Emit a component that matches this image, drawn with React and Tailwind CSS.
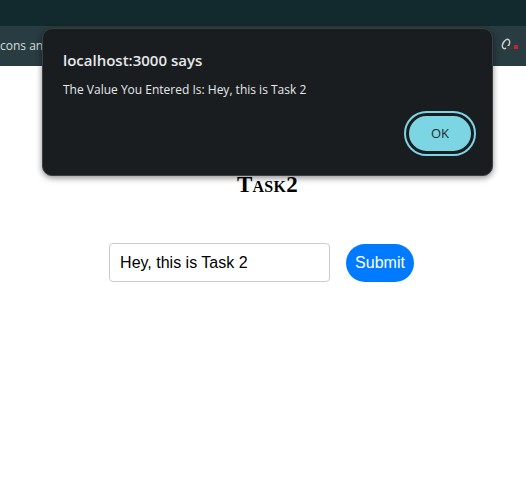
import React, { useState } from 'react';

export default function App() {
  const [value, setValue] = useState('Hey, this is Task 2');

  return (
    <div className="relative w-[526px] h-[490px] bg-white overflow-hidden font-['Liberation_Sans',Arial,sans-serif]">
      {/* browser chrome */}
      <div className="h-[26px] bg-[#12292e]" />
      <div className="h-[40px] bg-[#283c41] flex items-center justify-between pr-2">
        <span className="text-[12px] text-[#d6dcdd] font-['Open_Sans',sans-serif]">cons and</span>
        <svg width="18" height="14" viewBox="0 0 18 14" className="mt-[-2px]">
          <ellipse cx="6" cy="6" rx="3" ry="5" transform="rotate(30 6 6)" fill="none" stroke="#c9cfd0" strokeWidth="1.6" />
          <rect x="6" y="8" width="8" height="3" rx="1" fill="#3a3a3a" />
          <rect x="14" y="7" width="4" height="4" fill="#c2253a" />
        </svg>
      </div>

      {/* page */}
      <div className="flex flex-col items-center">
        <h1 className="mt-[106px] ml-[9px] text-[23px] leading-[26px] font-bold text-black [font-variant:small-caps] font-['Liberation_Serif',serif] tracking-[0.3px]">
          Task2
        </h1>
        <form className="mt-[45px] flex items-center gap-4 ml-[-3px]" onSubmit={e => e.preventDefault()}>
          <input
            value={value}
            onChange={e => setValue(e.target.value)}
            className="w-[221px] h-[39px] border border-[#cccccc] rounded-[4px] px-[10px] text-[16px] text-black outline-none"
          />
          <button className="h-[38px] px-[9px] rounded-full bg-[#007bff] text-white text-[16px]">Submit</button>
        </form>
      </div>

      {/* alert dialog */}
      <div className="absolute left-[42px] top-[28px] w-[451px] h-[148px] bg-[#1a1d20] rounded-[10px] border border-[#3b3f43] shadow-[0_2px_6px_rgba(0,0,0,0.45)] font-['Open_Sans',sans-serif]">
        <div className="pl-[20px] pt-[21px] text-[15px] leading-[20px] font-semibold text-[#e6e8ea]">localhost:3000 says</div>
        <div className="pl-[20px] pt-[12px] text-[12px] leading-[16px] text-[#e6e8ea]">
          The Value You Entered Is: Hey, this is Task 2
        </div>
        <div className="flex justify-end pr-[16px] pt-[13px]">
          <div className="rounded-full border-2 border-[#7bd5e2] p-[1px]">
            <button className="w-[66px] h-[39px] rounded-full bg-[#7bd5e2] border-2 border-[#1a1d20] text-[13px] text-[#1a2b30]">
              OK
            </button>
          </div>
        </div>
      </div>
    </div>
  );
}
